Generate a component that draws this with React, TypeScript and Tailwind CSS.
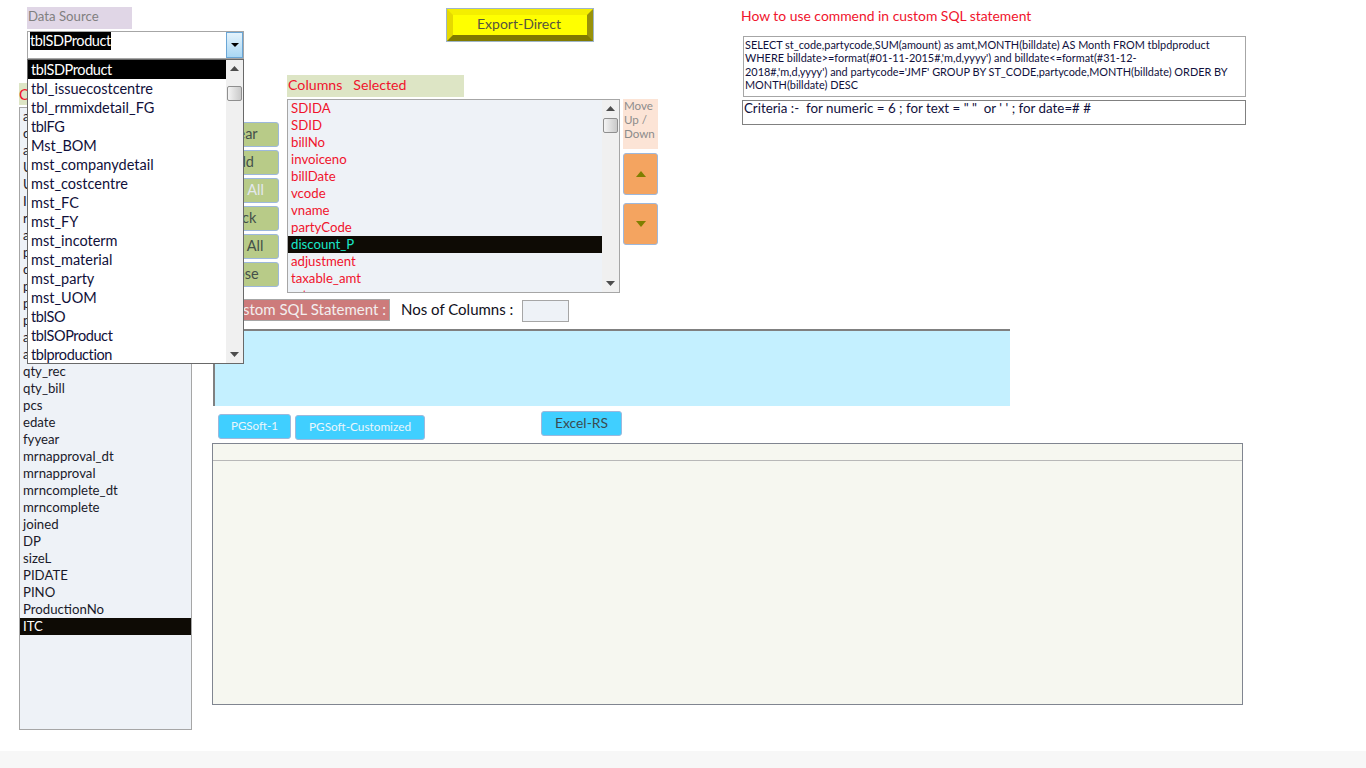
const leftItems = ["amount","cgst","amt","UOM","Unit","ID","rate","amtnet","price","disc","pack","party","pid","adate","auth","qty_rec","qty_bill","pcs","edate","fyyear","mrnapproval_dt","mrnapproval","mrncomplete_dt","mrncomplete","joined","DP","sizeL","PIDATE","PINO","ProductionNo"];
const selected = ["SDIDA","SDID","billNo","invoiceno","billDate","vcode","vname","partyCode","discount_P","adjustment","taxable_amt","rate"];
const tables = ["tblSDProduct","tbl_issuecostcentre","tbl_rmmixdetail_FG","tblFG","Mst_BOM","mst_companydetail","mst_costcentre","mst_FC","mst_FY","mst_incoterm","mst_material","mst_party","mst_UOM","tblSO","tblSOProduct","tblproduction"];
const font = "font-['Lato','Noto_Sans',sans-serif]";

function Tri({ up, color, w = 9, h = 5 }: { up?: boolean; color: string; w?: number; h?: number }) {
  return (
    <svg width={w} height={h} viewBox="0 0 10 6" preserveAspectRatio="none">
      <polygon points={up ? "5,0 10,6 0,6" : "0,0 10,0 5,6"} fill={color} />
    </svg>
  );
}

function Scrollbar({ thumbTop }: { thumbTop: number }) {
  return (
    <div className="w-[17px] h-full bg-[#f0f0f0] flex flex-col items-center justify-between py-[6px] relative shrink-0">
      <Tri up color="#4d4d4d" />
      <div className="absolute left-[1px] w-[15px] h-[15px] rounded-[2px] border border-[#8f8f8f] bg-gradient-to-r from-[#f4f4f4] to-[#c9c9c9]" style={{ top: thumbTop }} />
      <Tri color="#4d4d4d" />
    </div>
  );
}

function GreenBtn({ label, light }: { label: string; light?: boolean }) {
  return (
    <div className={`h-[25px] w-[76px] rounded-[3px] border border-[#9db8dc] bg-[#b8cb88] flex items-center justify-center pb-[2px] text-[14.5px] ${light ? "text-[#e4e8ee]" : "text-[#44504a]"}`}>
      {label}
    </div>
  );
}

function MoveBtn({ up }: { up?: boolean }) {
  return (
    <div className="h-[42px] w-[35px] rounded-[3px] border border-[#9db8dc] bg-[#f4a460] flex items-center justify-center">
      <Tri up={up} color="#7f7f00" w={10} h={6} />
    </div>
  );
}

function BlueBtn({ label, w, h, mt, dark, size }: { label: string; w: string; h: string; mt: string; dark?: boolean; size: string }) {
  return (
    <div className={`${w} ${h} ${mt} ${size} rounded-[3px] border border-[#9db8dc] bg-[#40cfff] flex items-center justify-center shrink-0 ${dark ? "text-[#3b4a50] pb-[1px]" : "text-[#eaf6fb] pb-[2px]"}`}>
      {label}
    </div>
  );
}

export default function App() {
  return (
    <div className={`${font} relative w-[1366px] h-[768px] bg-white overflow-hidden`}>
      <div className="flex h-[751px]">
        {/* left column */}
        <div className="ml-[19px] w-[173px] pt-[83px] flex flex-col shrink-0">
          <div className="h-[22px] w-[140px] bg-[#dde5c5] text-[#f0142d] text-[15px] leading-[22px] whitespace-nowrap overflow-hidden">Columns Available</div>
          <div className="mt-[2px] h-[623px] border border-[#a6a6a6] bg-[#eef2f7] text-[13.2px] leading-[17px] text-[#1a1a2a]">
            {leftItems.map((t) => (
              <div key={t} className="h-[17px] pl-[3px] whitespace-nowrap">{t}</div>
            ))}
            <div className="h-[17px] pl-[3px] bg-[#0e0b05] text-white">ITC</div>
          </div>
        </div>

        {/* right column */}
        <div className="ml-[11px] w-[1043px] flex flex-col">
          <div className="flex h-[293px]">
            <div className="w-[538px] flex flex-col shrink-0">
              <div className="mt-[8px] ml-[243px] h-[34px] w-[148px] border border-[#9fb5c8] shrink-0">
                <div className="h-full w-full box-border border-[6px] border-t-[#f4ee00] border-l-[#e6d900] border-r-[#99920a] border-b-[#807a00] bg-[#ffff00] flex items-center justify-center pb-[3px] pr-[2px] text-[14px] text-[#55553f]">
                  Export-Direct
                </div>
              </div>
              <div className="mt-[33px] ml-[84px] h-[22px] w-[177px] bg-[#dde5c5] text-[#f0142d] text-[14.2px] leading-[20px] pl-[1px] whitespace-pre">Columns   Selected</div>
              <div className="mt-[2px] flex h-[194px]">
                <div className="w-[76px] pt-[23px] flex flex-col gap-[3px] shrink-0">
                  <GreenBtn label="Clear" />
                  <GreenBtn label="Add" />
                  <GreenBtn label="Add All" light />
                  <GreenBtn label="Back" />
                  <GreenBtn label="Out All" />
                  <GreenBtn label="Close" />
                </div>
                <div className="ml-[8px] w-[333px] h-[194px] border border-[#a6a6a6] bg-[#eef2f7] flex shrink-0 overflow-hidden">
                  <div className="flex-1 text-[13.2px] leading-[17px] text-[#f0142d] overflow-hidden">
                    {selected.map((t) => (
                      <div key={t} className={`h-[17px] pl-[3px] ${t === "discount_P" ? "bg-[#0e0b05] text-[#19e6c8]" : ""}`}>{t}</div>
                    ))}
                  </div>
                  <Scrollbar thumbTop={18} />
                </div>
                <div className="ml-[3px] w-[35px] flex flex-col shrink-0">
                  <div className="h-[50px] bg-[#fce4d6] text-[#8c8c8c] text-[11.6px] leading-[14px] pl-[1px]">Move<br />Up /<br />Down</div>
                  <div className="mt-[4px]"><MoveBtn up /></div>
                  <div className="mt-[8px]"><MoveBtn /></div>
                </div>
              </div>
            </div>
            <div className="w-[505px] flex flex-col">
              <div className="mt-[7px] h-[18px] text-[#f0142d] text-[13.9px] leading-[17px] whitespace-nowrap">How to use commend in custom SQL statement</div>
              <div className="mt-[11px] ml-[2px] h-[61px] w-[503px] border border-[#a6a6a6] pl-[1px] pt-[1px] text-[10.9px] leading-[13.3px] text-[#10103c] whitespace-nowrap">
                <div>SELECT st_code,partycode,SUM(amount) as amt,MONTH(billdate) AS Month FROM tblpdproduct</div>
                <div>{"WHERE billdate>=format(#01-11-2015#,'m,d,yyyy') and billdate<=format(#31-12-"}</div>
                <div>{"2018#,'m,d,yyyy') and partycode='JMF' GROUP BY ST_CODE,partycode,MONTH(billdate) ORDER BY"}</div>
                <div>MONTH(billdate) DESC</div>
              </div>
              <div className="mt-[3px] ml-[1px] h-[25px] w-[504px] border border-[#808080] pl-[1px] text-[13.35px] leading-[15px] text-[#10103c] whitespace-pre">{"Criteria :-  for numeric = 6 ; for text = \" \"  or ' ' ; for date=# #"}</div>
            </div>
          </div>

          <div className="mt-[6px] flex h-[23px] ml-[11px]">
            <div className="w-[176px] h-[22px] border border-[#a6a6a6] bg-[#cd7b7b] text-[#f2eeee] text-[15px] leading-[18px] text-right pr-[3px] whitespace-nowrap">Custom SQL Statement :</div>
            <div className="ml-[11px] w-[121px] text-[15px] leading-[21px] text-[#101020] whitespace-nowrap">Nos of Columns :</div>
            <div className="w-[47px] h-[22px] mt-[1px] border border-[#a6a6a6] bg-[#eef2f7]"></div>
          </div>

          <div className="mt-[7px] ml-[10px] w-[797px] h-[77px] bg-[#c4f0ff] border-t-2 border-l-2 border-t-[#808080] border-l-[#808080]"></div>

          <div className="flex h-[37px] ml-[15px] items-start">
            <BlueBtn label="PGSoft-1" w="w-[73px]" h="h-[25px]" mt="mt-[8px]" size="text-[11.6px]" />
            <BlueBtn label="PGSoft-Customized" w="w-[130px]" h="h-[25px]" mt="mt-[9px] ml-[4px]" size="text-[11.8px]" />
            <BlueBtn label="Excel-RS" w="w-[81px]" h="h-[25px]" mt="mt-[5px] ml-[116px]" size="text-[13.8px]" dark />
          </div>

          <div className="ml-[9px] w-[1031px] h-[262px] border border-[#808590] bg-[#f6f7f0] flex flex-col">
            <div className="h-[17px] border-b border-[#b8b8b8]"></div>
          </div>
        </div>
      </div>
      <div className="h-[17px] bg-[#f7f7f7]"></div>

      {/* combo + open dropdown, lying over the form */}
      <div className="absolute left-[27px] top-[7px] w-[217px]">
        <div className="h-[22px] w-[105px] bg-[#e0d6e6] text-[#808080] text-[13.2px] leading-[18px] pl-[1px]">Data Source</div>
        <div className="mt-[2px] h-[28px] border border-[#a6a6a6] bg-white flex justify-between">
          <div className="ml-[2px] h-[18px] bg-black text-white text-[14.5px] leading-[17px] tracking-[-0.4px] self-start whitespace-nowrap">tblSDProduct</div>
          <div className="w-[17px] h-full border border-[#6aa6d6] bg-gradient-to-b from-[#e4f3fc] to-[#a9d7f4] flex items-center justify-center">
            <Tri color="#000" w={8} h={4} />
          </div>
        </div>
        <div className="h-[305px] border border-[#696969] bg-white flex text-[14.5px] leading-[19px] text-[#10103a]">
          <div className="flex-1 overflow-hidden">
            {tables.map((t, i) => (
              <div key={t} className={`h-[19px] pl-[3px] whitespace-nowrap ${i === 0 ? "bg-black text-white" : ""} ${t.startsWith("tbl") && !t.includes("_") ? "tracking-[-0.4px]" : ""}`}>{t}</div>
            ))}
          </div>
          <Scrollbar thumbTop={26} />
        </div>
      </div>
    </div>
  );
}
